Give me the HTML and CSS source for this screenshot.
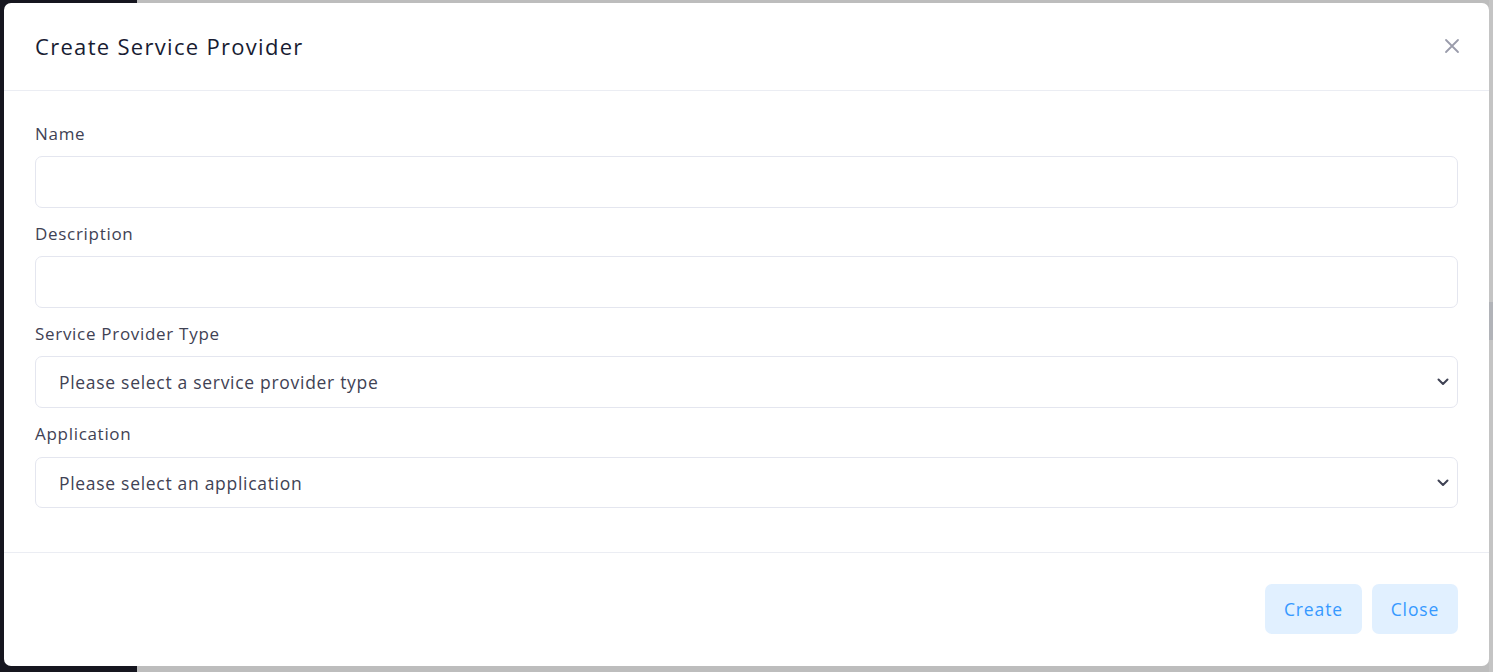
FILE: index.html
```html
<!DOCTYPE html>
<html lang="en">
<head>
<meta charset="utf-8">
<title>Create Service Provider</title>
<link rel="stylesheet" href="styles.css">
</head>
<body>
<div class="page">
  <div class="sidebar"></div>
  <div class="content"></div>
  <div class="scrollbar"><div class="thumb"></div></div>
  <div class="overlay">
    <div class="modal">
      <div class="modal-header">
        <h2 class="modal-title">Create Service Provider</h2>
        <button class="close-x" aria-label="Close">
          <svg width="16" height="16" viewBox="0 0 16 16"><path d="M2 2L14 14M14 2L2 14" stroke="#9a9cab" stroke-width="1.8" stroke-linecap="round" fill="none"/></svg>
        </button>
      </div>
      <div class="modal-body">
        <div class="group">
          <label class="label">Name</label>
          <div class="control"></div>
        </div>
        <div class="group">
          <label class="label">Description</label>
          <div class="control"></div>
        </div>
        <div class="group">
          <label class="label">Service Provider Type</label>
          <div class="control select"><span>Please select a service provider type</span>
            <svg class="chev" width="12" height="8" viewBox="0 0 12 8"><path d="M1.5 1.5L6 6L10.5 1.5" stroke="#3f4254" stroke-width="2" fill="none" stroke-linecap="round" stroke-linejoin="round"/></svg>
          </div>
        </div>
        <div class="group group-last">
          <label class="label">Application</label>
          <div class="control select"><span>Please select an application</span>
            <svg class="chev" width="12" height="8" viewBox="0 0 12 8"><path d="M1.5 1.5L6 6L10.5 1.5" stroke="#3f4254" stroke-width="2" fill="none" stroke-linecap="round" stroke-linejoin="round"/></svg>
          </div>
        </div>
      </div>
      <div class="modal-footer">
        <button class="btn btn-create">Create</button>
        <button class="btn btn-close">Close</button>
      </div>
    </div>
  </div>
</div>
</body>
</html>
```
FILE: styles.css
```css
* { box-sizing: border-box; }
html, body { margin: 0; padding: 0; }
body {
  width: 1493px;
  height: 672px;
  overflow: hidden;
  font-family: "Open Sans", "Noto Sans", sans-serif;
  background: #bdbdbd;
}
.page {
  position: relative;
  width: 1493px;
  height: 672px;
  display: flex;
}
.sidebar { width: 137px; height: 100%; background: #16161f; }
.content { flex: 1; height: 100%; background: #bdbdbd; }
.scrollbar {
  position: absolute;
  right: 0; top: 0;
  width: 4px; height: 100%;
  background: #c4c4c4;
}
.thumb {
  position: absolute;
  top: 302px; left: 0;
  width: 4px; height: 38px;
  background: #b1b3b8;
}
.overlay {
  position: absolute;
  inset: 0;
  padding: 3px 4px 0 4px;
}
.modal {
  width: 1485px;
  height: 663px;
  background: #ffffff;
  border-radius: 7px;
  display: flex;
  flex-direction: column;
}
.modal-header {
  height: 88px;
  border-bottom: 1px solid #ebedf3;
  display: flex;
  align-items: center;
  justify-content: space-between;
  padding: 0 29px 0 31px;
}
.modal-title {
  margin: 0 0 2px 0;
  font-size: 22px;
  font-weight: 500;
  color: #181c32;
  letter-spacing: 1.3px;
}
.close-x {
  border: 0;
  background: none;
  padding: 0;
  width: 16px; height: 16px;
  display: flex;
  margin-bottom: 2px;
}
.modal-body {
  padding: 31px 31px 30px 31px;
  border-bottom: 1px solid #ebedf3;
}
.group {
  display: flex;
  flex-direction: column;
  margin-bottom: 14px;
}
.label {
  font-size: 17px;
  line-height: 24px;
  color: #3f4254;
  letter-spacing: 0.7px;
  margin-bottom: 10px;
}
.control {
  height: 52px;
  border: 1px solid #e4e6ef;
  border-radius: 7px;
  background: #fff;
}
.select {
  display: flex;
  align-items: center;
  justify-content: space-between;
  padding: 0 8px 0 23px;
  font-size: 17.5px;
  letter-spacing: 0.7px;
  color: #3f4254;
}
.group-last .label { margin-bottom: 11px; }
.group-last .control { height: 51px; }
.modal-footer {
  flex: 1;
  display: flex;
  justify-content: flex-end;
  align-items: flex-start;
  gap: 10px;
  padding: 31px 31px 0 31px;
}
.btn {
  height: 50px;
  padding: 0;
  border: 0;
  border-radius: 7px;
  background: #e1f0ff;
  color: #3699ff;
  font-family: inherit;
  font-size: 17.5px;
  font-weight: 500;
  letter-spacing: 0.9px;
}
.btn-create { width: 97px; }
.btn-close { width: 86px; }
```
